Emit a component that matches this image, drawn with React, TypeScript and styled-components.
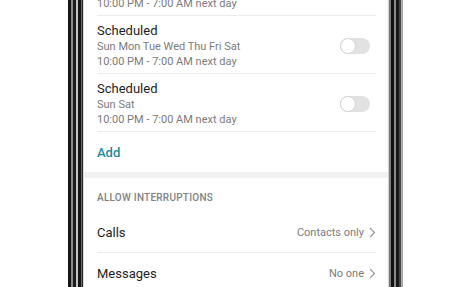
import React from "react";
import styled, { createGlobalStyle } from "styled-components";

const GlobalStyle = createGlobalStyle`
  html, body {
    margin: 0;
    padding: 0;
    background: #fff;
    font-family: Roboto, "Noto Sans", Arial, sans-serif;
    -webkit-font-smoothing: antialiased;
  }
`;

const schedules = [
  { days: "Sun Mon Tue Wed Thu Fri Sat", time: "10:00 PM - 7:00 AM next day" },
  { days: "Sun Mon Tue Wed Thu Fri Sat", time: "10:00 PM - 7:00 AM next day" },
  { days: "Sun Sat", time: "10:00 PM - 7:00 AM next day" },
];

const Chevron = () => (
  <svg width="7" height="11" viewBox="0 0 7 11">
    <polyline points="1,1 5.5,5.5 1,10" fill="none" stroke="#9a9a9a" strokeWidth="1.2" />
  </svg>
);

const App = () => {
  return (
    <>
      <GlobalStyle />
      <Page>
        <Phone>
          <Bezel side="left" />
          <Screen>
            <List>
              {schedules.map((s, i) => (
                <ScheduleRow key={i}>
                  <RowText>
                    <Title>Scheduled</Title>
                    <Sub>{s.days}</Sub>
                    <Sub>{s.time}</Sub>
                  </RowText>
                  <Toggle />
                </ScheduleRow>
              ))}
              <AddRow>Add</AddRow>
            </List>
            <Band />
            <SectionHeader>Allow interruptions</SectionHeader>
            <SettingRow>
              <SettingLabel>Calls</SettingLabel>
              <SettingValue>
                Contacts only <Chevron />
              </SettingValue>
            </SettingRow>
            <SettingRow last>
              <SettingLabel>Messages</SettingLabel>
              <SettingValue>
                No one <Chevron />
              </SettingValue>
            </SettingRow>
          </Screen>
          <Bezel side="right" />
        </Phone>
      </Page>
    </>
  );
};

const Page = styled.div`
  width: 474px;
  height: 287px;
  overflow: hidden;
  display: flex;
  padding-left: 68px;
  box-sizing: border-box;
`;

const Phone = styled.div`
  display: flex;
  height: 287px;
`;

interface BezelProps {
  readonly side: "left" | "right";
}

const Bezel = styled.div<BezelProps>`
  width: 16px;
  height: 100%;
  background: ${(p) =>
    p.side === "left"
      ? `linear-gradient(to right,
          #161616 0 3px, #8a8a8a 3px 5px, #1c1c1c 5px 8px, #c4c4c4 8px 10px,
          #141414 10px 13px, #6a6a6a 13px 14px, #2a2a2a 14px 15px, #dcdcdc 15px 16px)`
      : `linear-gradient(to right,
          #d0d0d0 0 1px, #7a7a7a 1px 3px, #121212 3px 6px, #8a8a8a 6px 8px,
          #181818 8px 11px, #4a4a4a 11px 13px, #a8a8a8 13px 15px, #fff 15px 16px)`};
`;

const Screen = styled.div`
  width: 304px;
  height: 100%;
  background: #fff;
  overflow: hidden;
  color: #202020;
`;

const List = styled.div`
  margin-top: -42px;
  padding: 0 12px 0 13px;
`;

const ScheduleRow = styled.div`
  display: flex;
  align-items: center;
  justify-content: space-between;
  padding: 6.5px 6px 4.5px 0;
  border-bottom: 1px solid #ececec;
`;

const RowText = styled.div`
  display: flex;
  flex-direction: column;
`;

const Title = styled.div`
  font-size: 13px;
  line-height: 16px;
  color: #1e1e1e;
`;

const Sub = styled.div`
  font-size: 11px;
  line-height: 15px;
  color: #7b7b7b;
`;

const Toggle = styled.div`
  position: relative;
  width: 30px;
  height: 16px;
  border-radius: 8px;
  background: #e2e2e2;

  &::after {
    content: "";
    position: absolute;
    left: 0;
    top: 0;
    width: 14px;
    height: 14px;
    border-radius: 50%;
    background: #fff;
    border: 1px solid #d4d4d4;
  }
`;

const AddRow = styled.div`
  height: 40px;
  display: flex;
  align-items: center;
  font-size: 13px;
  font-weight: 500;
  color: #1b8a9b;
`;

const Band = styled.div`
  height: 6px;
  background: #f1f1f1;
`;

const SectionHeader = styled.div`
  padding: 14px 13px 9px;
  font-size: 10px;
  line-height: 12px;
  font-weight: 500;
  letter-spacing: 0.25px;
  text-transform: uppercase;
  color: #828282;
`;

interface SettingRowProps {
  readonly last?: boolean;
}

const SettingRow = styled.div<SettingRowProps>`
  height: ${(p) => (p.last ? "40px" : "39px")};
  margin: 0 12px 0 13px;
  display: flex;
  align-items: center;
  justify-content: space-between;
  border-bottom: ${(p) => (p.last ? "none" : "1px solid #ececec")};
`;

const SettingLabel = styled.div`
  font-size: 13px;
  color: #1e1e1e;
`;

const SettingValue = styled.div`
  display: flex;
  align-items: center;
  gap: 5px;
  font-size: 11px;
  color: #7b7b7b;
`;

export default App;
